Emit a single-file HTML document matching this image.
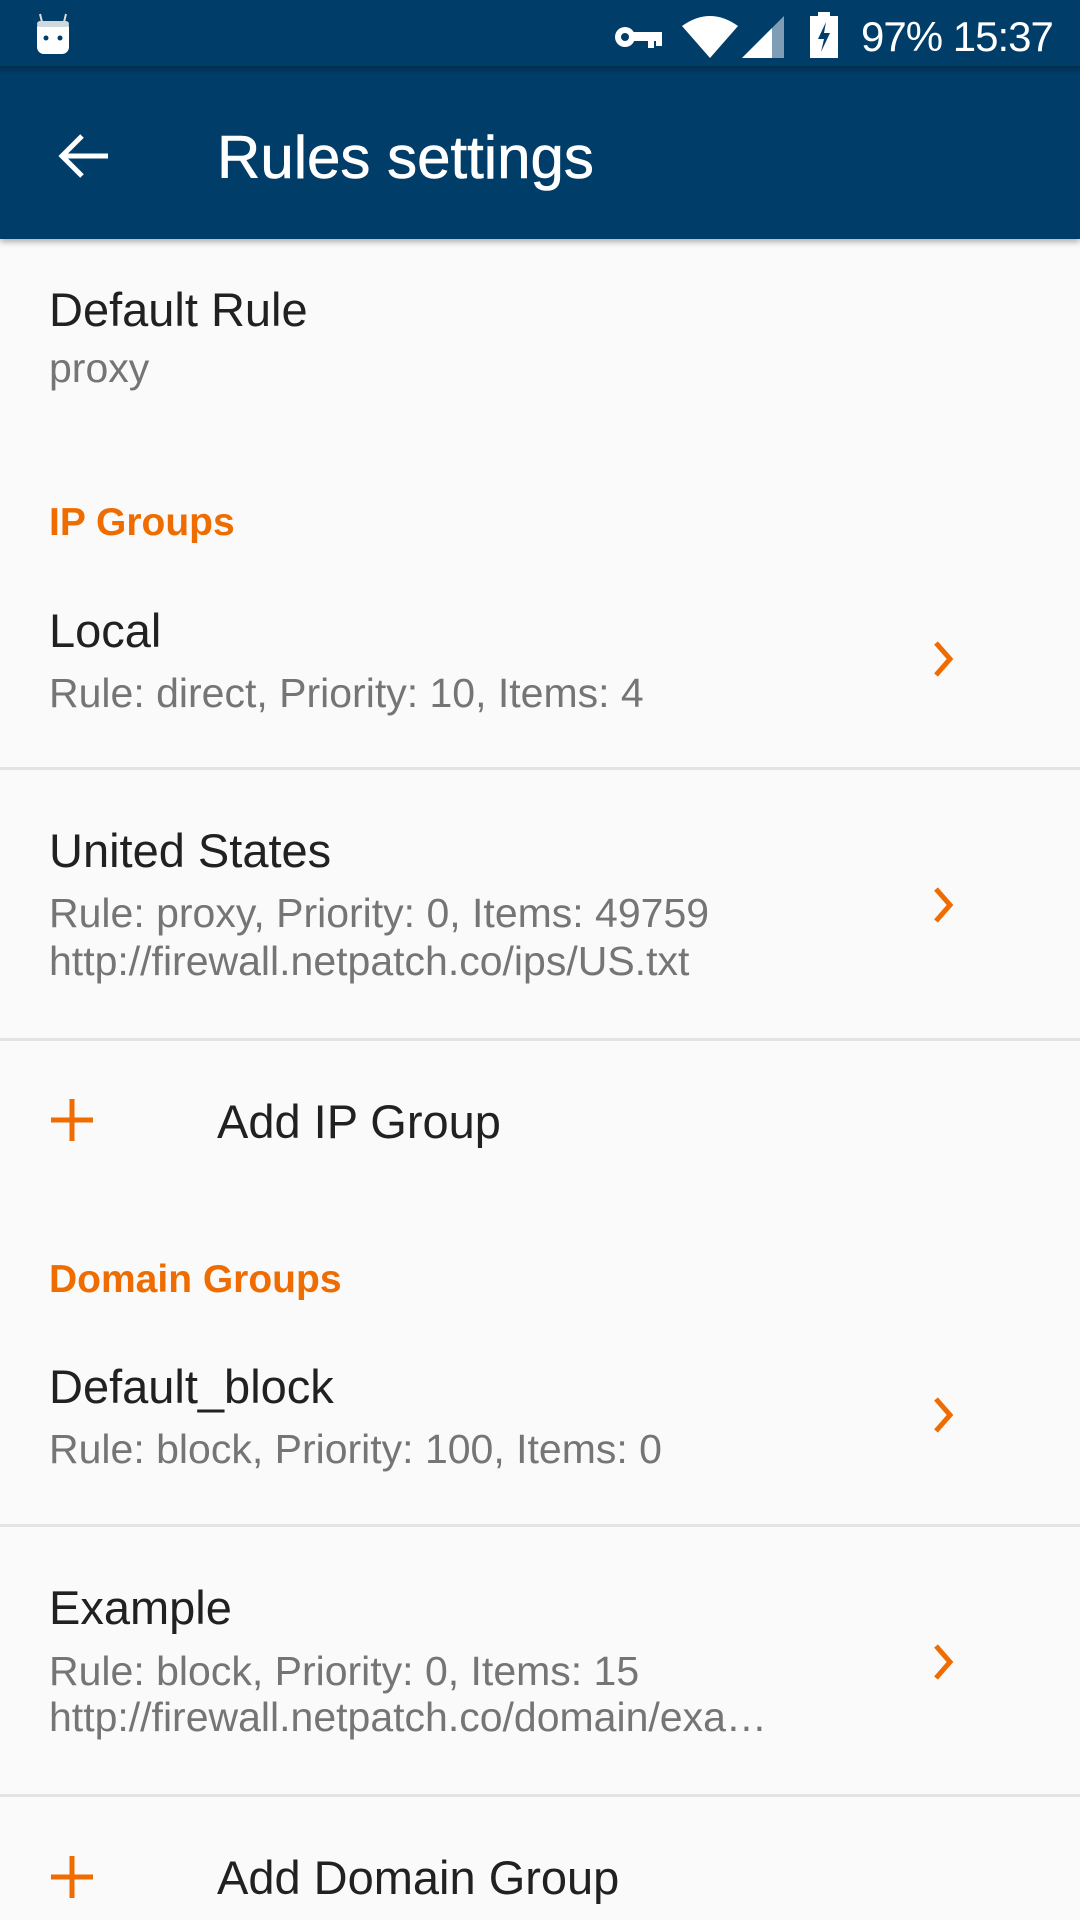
<!DOCTYPE html>
<html><head><meta charset="utf-8"><style>
*{margin:0;padding:0;box-sizing:border-box}
body{width:1080px;height:1920px;background:#fafafa;position:relative;overflow:hidden;font-family:"Liberation Sans",sans-serif}
.t{position:absolute;line-height:1;white-space:nowrap}
.h{font-size:47px;color:#212121}
.s{font-size:41px;color:#757575}
.c{font-size:39px;color:#ef6c00;font-weight:bold}
.d{position:absolute;left:0;width:1080px;height:3px;background:#e3e3e3}
.chev{position:absolute;left:930px;width:28px;height:40px}
.plus{position:absolute;left:49px;width:46px;height:46px}
</style></head><body>
<div style="position:absolute;left:0;top:0;width:1080px;height:239px;background:#013d69;box-shadow:0 3px 6px rgba(0,0,0,.3)"></div>
<div style="position:absolute;left:0;top:66px;width:1080px;height:8px;background:linear-gradient(#012e50,#013d69)"></div>
<svg style="position:absolute;left:34px;top:12px" width="40" height="44" viewBox="0 0 40 44"><path d="M6 2 L8 10 M32 2 L30 10" stroke="#ddd" stroke-width="2"/><rect x="3" y="9" width="32" height="33" rx="7" fill="#fff"/><rect x="3" y="9" width="32" height="6" rx="3" fill="#cfd8dc"/><circle cx="12" cy="26" r="2.5" fill="#013d69"/><circle cx="26" cy="26" r="2.5" fill="#013d69"/></svg>
<svg style="position:absolute;left:614px;top:22px" width="50" height="30" viewBox="0 0 50 30"><circle cx="11" cy="15" r="10" fill="#fff"/><circle cx="11" cy="15" r="4" fill="#013d69"/><rect x="18" y="10" width="30" height="9" fill="#fff"/><rect x="34" y="17" width="6" height="9" fill="#fff"/><rect x="42" y="17" width="6" height="7" fill="#fff"/></svg>
<svg style="position:absolute;left:682px;top:14px" width="56" height="44" viewBox="0 0 56 44"><path d="M0 12 Q28 -8 56 12 L28 44 Z" fill="#fff"/></svg>
<svg style="position:absolute;left:742px;top:16px" width="44" height="42" viewBox="0 0 44 42"><path d="M0 42 L42 0 L42 42 Z" fill="#7f9db5"/><path d="M0 42 L30 12 L30 42 Z" fill="#fff"/></svg>
<svg style="position:absolute;left:810px;top:12px" width="28" height="46" viewBox="0 0 28 46"><rect x="8" y="0" width="12" height="5" fill="#fff"/><rect x="0" y="4" width="28" height="42" fill="#fff"/><path d="M16 10 L8 27 L14 27 L11 40 L20 21 L14 21 Z" fill="#013d69"/></svg>
<div class="t" style="left:861px;top:16px;font-size:42px;color:#fff;letter-spacing:-1px">97% 15:37</div>
<svg style="position:absolute;left:58px;top:132px" width="52" height="48" viewBox="0 0 52 48"><path d="M50 24 H6 M24 4 L4 24 L24 44" stroke="#fff" stroke-width="5" fill="none"/></svg>
<div class="t" style="left:217px;top:128px;font-size:60px;color:#fff;-webkit-text-stroke:0.6px #fff">Rules settings</div>

<div class="t h" style="left:49px;top:286px">Default Rule</div>
<div class="t s" style="left:49px;top:348px">proxy</div>
<div class="t c" style="left:49px;top:503px">IP Groups</div>

<div class="t h" style="left:49px;top:607px">Local</div>
<div class="t s" style="left:49px;top:673px">Rule: direct, Priority: 10, Items: 4</div>
<svg class="chev" style="top:639px" viewBox="0 0 28 40"><path d="M6 4 L20 20 L6 36" stroke="#ef6c00" stroke-width="5" fill="none"/></svg>
<div class="d" style="top:767px"></div>

<div class="t h" style="left:49px;top:827px">United States</div>
<div class="t s" style="left:49px;top:893px">Rule: proxy, Priority: 0, Items: 49759</div>
<div class="t s" style="left:49px;top:941px">http://firewall.netpatch.co/ips/US.txt</div>
<svg class="chev" style="top:885px" viewBox="0 0 28 40"><path d="M6 4 L20 20 L6 36" stroke="#ef6c00" stroke-width="5" fill="none"/></svg>
<div class="d" style="top:1038px"></div>

<svg class="plus" style="top:1097px" viewBox="0 0 46 46"><path d="M23 2 V44 M2 23 H44" stroke="#ef6c00" stroke-width="5"/></svg>
<div class="t h" style="left:217px;top:1098px">Add IP Group</div>

<div class="t c" style="left:49px;top:1260px">Domain Groups</div>

<div class="t h" style="left:49px;top:1363px">Default_block</div>
<div class="t s" style="left:49px;top:1429px">Rule: block, Priority: 100, Items: 0</div>
<svg class="chev" style="top:1395px" viewBox="0 0 28 40"><path d="M6 4 L20 20 L6 36" stroke="#ef6c00" stroke-width="5" fill="none"/></svg>
<div class="d" style="top:1524px"></div>

<div class="t h" style="left:49px;top:1584px">Example</div>
<div class="t s" style="left:49px;top:1651px">Rule: block, Priority: 0, Items: 15</div>
<div class="t s" style="left:49px;top:1697px">http://firewall.netpatch.co/domain/exa…</div>
<svg class="chev" style="top:1642px" viewBox="0 0 28 40"><path d="M6 4 L20 20 L6 36" stroke="#ef6c00" stroke-width="5" fill="none"/></svg>
<div class="d" style="top:1794px"></div>

<svg class="plus" style="top:1854px" viewBox="0 0 46 46"><path d="M23 2 V44 M2 23 H44" stroke="#ef6c00" stroke-width="5"/></svg>
<div class="t h" style="left:217px;top:1854px">Add Domain Group</div>
</body></html>
